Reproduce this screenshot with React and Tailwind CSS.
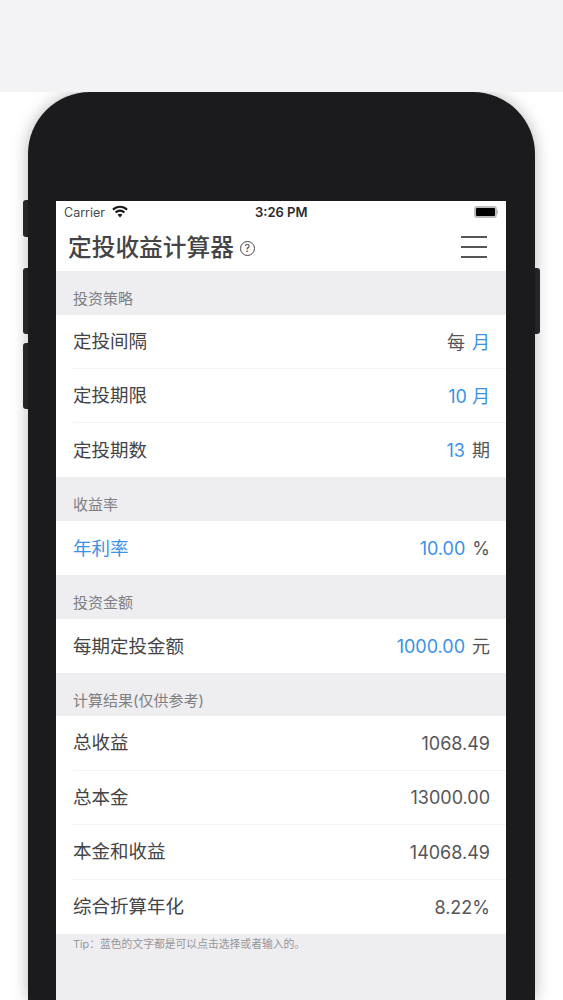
import React from 'react';

const font = "font-['Inter','Noto_Sans_CJK_SC',sans-serif]";

const Section = ({ title, className = 'h-[44px]' }) => (
    <div className={`${className} pl-[17px] pt-[20px] text-[15px] leading-[16px] text-[#808084]`}>{title}</div>
);

const Row = ({ label, blueLabel, last, className = 'h-[54px]', children }) => (
    <div className={`${className} pl-[17px] bg-white`}>
        <div className={`h-full pr-[16px] pt-[1px] flex items-center justify-between ${last ? '' : 'border-b border-[#f3f3f5]'}`}>
            <span className={`text-[18.5px] ${blueLabel ? 'text-[#3a92e4]' : 'text-[#444447]'}`}>{label}</span>
            <span className="text-[18px] text-[#555558] flex gap-[7px]">{children}</span>
        </div>
    </div>
);

const Blue = ({ children }) => <span className="text-[#3a92e4]">{children}</span>;

const SideButton = ({ className }) => (
    <div className={`absolute w-[6px] bg-[#2a292c] ${className}`} />
);

export default function App() {
    return (
        <div className={`h-[1000px] overflow-hidden bg-white ${font}`}>
            <div className="relative z-10 h-[92px] bg-[#f3f2f5]" />
            <div className="relative ml-[28px] w-[507px] h-[908px]">
                <SideButton className="-left-[5px] top-[108px] h-[37px] rounded-l-[3px]" />
                <SideButton className="-left-[5px] top-[176px] h-[66px] rounded-l-[3px]" />
                <SideButton className="-left-[5px] top-[251px] h-[66px] rounded-l-[3px]" />
                <SideButton className="-right-[5px] top-[176px] h-[66px] rounded-r-[3px]" />
                <div className="relative h-full rounded-t-[62px] bg-[#1b1a1d] pt-[109px] px-[28px] shadow-[0_0_16px_rgba(0,0,0,0.28)]">
                    <div className="h-full w-[450px] bg-[#eeedf0]">
                        <div className="h-[70px] bg-white">
                            <div className="relative h-[22px] flex items-center justify-between px-[8px] pt-[2px] text-[12.5px] text-[#4a4a4c]">
                                <div className="flex items-center gap-[7px]">
                                    <span>Carrier</span>
                                    <svg width="16" height="13" viewBox="0 0 16 13" className="-mt-[3px]">
                                        <path d="M1 4.6a10 10 0 0 1 14 0" fill="none" stroke="#1b1a1d" strokeWidth="2.2" />
                                        <path d="M3.6 7.4a6.2 6.2 0 0 1 8.8 0" fill="none" stroke="#1b1a1d" strokeWidth="2.2" />
                                        <path d="M5.6 9.8a3.2 3.2 0 0 1 4.8 0L8 12.6z" fill="#1b1a1d" />
                                    </svg>
                                </div>
                                <span className="absolute left-[199px] text-[13px] font-semibold text-[#2b2b2d]">3:26 PM</span>
                                <div className="flex items-center -mt-[2px]">
                                    <div className="w-[23px] h-[12px] rounded-[3px] border-2 border-[#bdbdbf] bg-black" />
                                    <div className="w-[1px] h-[4px] bg-[#bdbdbf]" />
                                </div>
                            </div>
                            <div className="flex items-center justify-between h-[48px] pl-[12px] pr-[19px]">
                                <div className="flex items-center gap-[6px] pt-[1px]">
                                    <span className="text-[23.7px] font-medium text-[#444447] leading-[30px]">定投收益计算器</span>
                                    <span className="mt-[2px] w-[15px] h-[15px] rounded-full border border-[#4a4a4d] flex items-center justify-center text-[11px] leading-none text-[#3a3a3d]">?</span>
                                </div>
                                <div className="flex flex-col gap-[8px]">
                                    <div className="w-[26px] h-[2px] bg-[#555558]" />
                                    <div className="w-[26px] h-[2px] bg-[#555558]" />
                                    <div className="w-[26px] h-[2px] bg-[#555558]" />
                                </div>
                            </div>
                        </div>

                        <Section title="投资策略" />
                        <Row label="定投间隔"><span>每</span><Blue>月</Blue></Row>
                        <Row label="定投期限"><Blue>10 月</Blue></Row>
                        <Row label="定投期数" last><Blue>13</Blue><span>期</span></Row>

                        <Section title="收益率" />
                        <Row label="年利率" blueLabel last><Blue>10.00</Blue><span>%</span></Row>

                        <Section title="投资金额" />
                        <Row label="每期定投金额" last><Blue>1000.00</Blue><span>元</span></Row>

                        <Section title="计算结果(仅供参考)" className="h-[43px]" />
                        <Row label="总收益" className="h-[54.5px]"><span>1068.49</span></Row>
                        <Row label="总本金" className="h-[54.5px]"><span>13000.00</span></Row>
                        <Row label="本金和收益" className="h-[54.5px]"><span>14068.49</span></Row>
                        <Row label="综合折算年化" last className="h-[54.5px]"><span>8.22%</span></Row>

                        <div className="pl-[17px] pt-[4px] text-[10.8px] leading-[14px] text-[#98979b]">Tip：蓝色的文字都是可以点击选择或者输入的。</div>
                    </div>
                </div>
            </div>
        </div>
    );
}
